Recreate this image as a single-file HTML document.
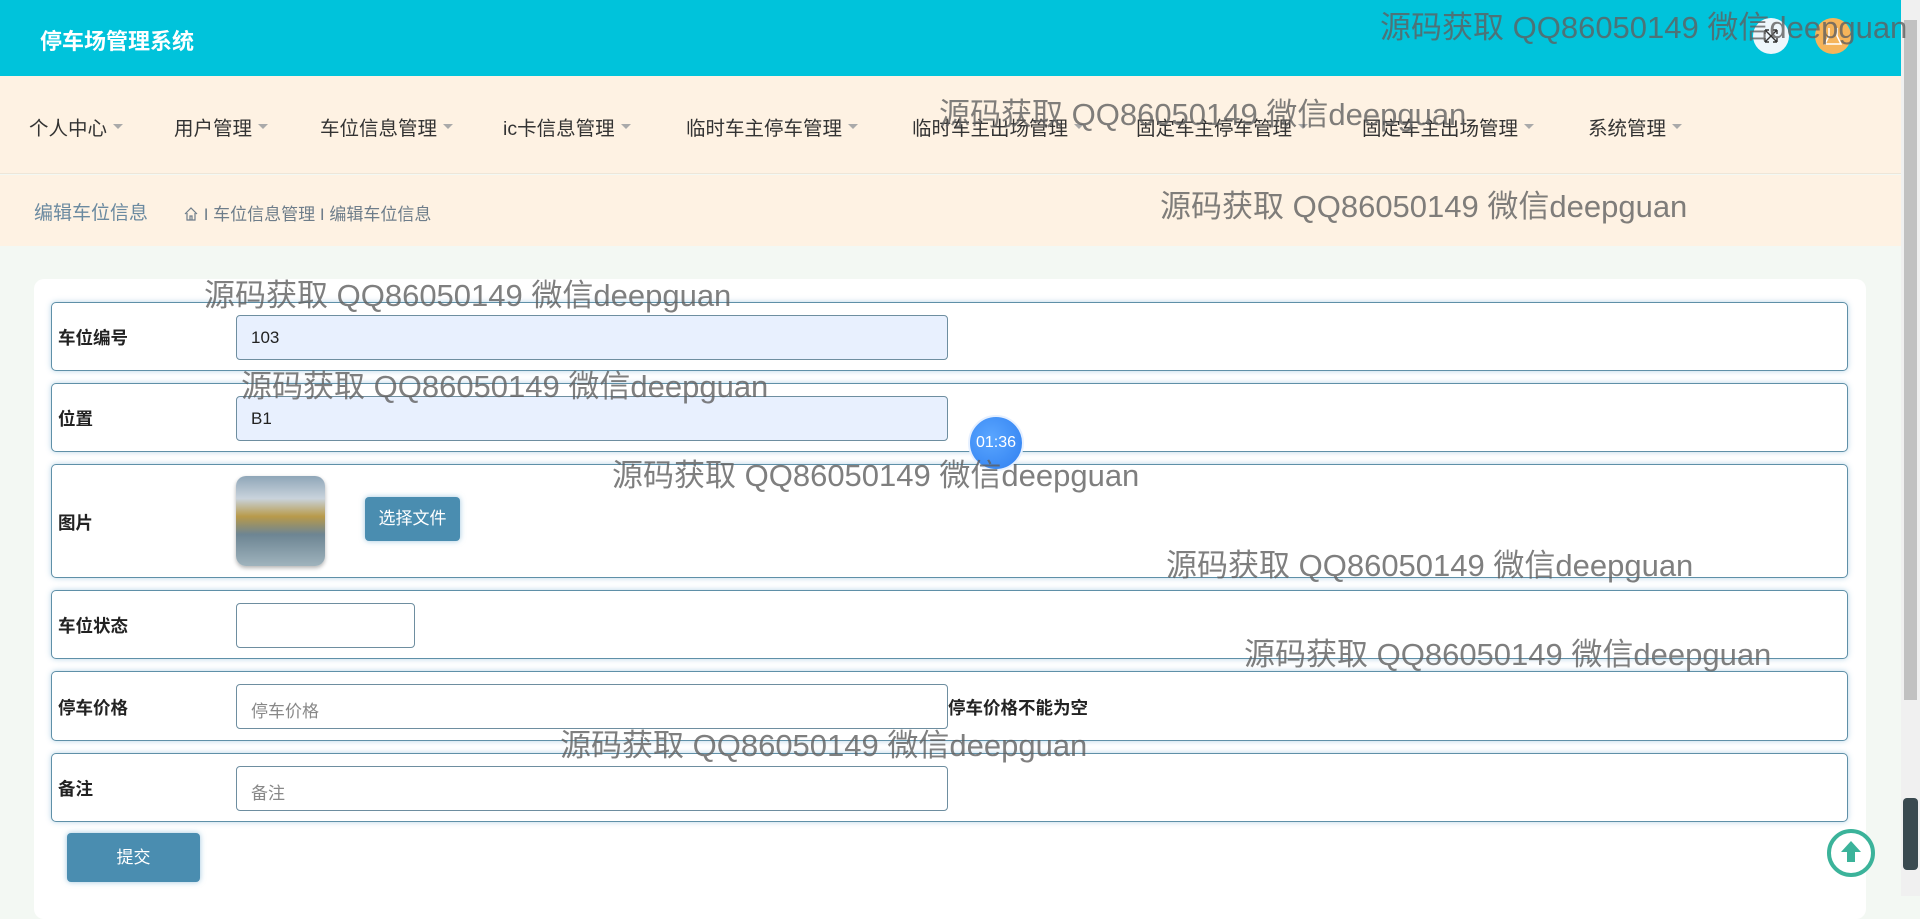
<!DOCTYPE html>
<html><head><meta charset="utf-8">
<style>
*{box-sizing:border-box;margin:0;padding:0}
body{width:1920px;height:896px;overflow:hidden;background:#F3F8F3;font-family:"Liberation Sans","Noto Sans CJK SC",sans-serif;position:relative}
.hdr{position:absolute;left:0;top:0;width:1901px;height:76px;background:#00C3DB;box-shadow:0 2px 4px rgba(0,0,0,.15)}
.hdr .t{position:absolute;left:40px;top:24px;color:#fff;font-size:22px;font-weight:bold}
.circ{position:absolute;top:18px;width:36px;height:36px;border-radius:50%}
.nav{position:absolute;left:0;top:76px;width:1901px;height:98px;background:#FEF2E3;border-bottom:1px solid #eee6d8}
.nav span{position:absolute;top:36px;font-size:19.5px;color:#333}
.nav span:after{content:"";display:inline-block;margin-left:6px;vertical-align:middle;border-left:5px solid transparent;border-right:5px solid transparent;border-top:5px solid #aaa;position:relative;top:-3px}
.bc{position:absolute;left:0;top:175px;width:1901px;height:71px;background:#FEF2E3}
.bc .a{position:absolute;left:34px;top:23px;font-size:19px;color:#6b8aa0}
.bc .b{position:absolute;left:183px;top:25px;font-size:17px;color:#6e7d8a}
.panel{position:absolute;left:34px;top:279px;width:1832px;height:640px;background:#fff;border-radius:10px}
.row{position:absolute;left:51px;width:1797px;border:1px solid #5f90a8;border-radius:5px;background:#fff;box-shadow:0 0 6px rgba(95,160,200,.45)}
.lbl{position:absolute;left:6px;font-size:17.5px;font-weight:bold;color:#222}
.inp{position:absolute;left:184px;width:712px;height:45px;border:1px solid #6e8ea0;border-radius:4px;font-size:17px;padding:12px 14px;color:#222}
.ph{color:#888}
.wm{position:absolute;font-size:31px;color:rgba(95,95,95,.8);white-space:nowrap;font-family:"Liberation Sans","Noto Sans CJK SC",sans-serif}
.btn{position:absolute;background:#4A8DB0;color:#fff;border-radius:4px;text-align:center;box-shadow:0 0 6px rgba(95,160,200,.6)}
</style></head><body>
<div class="hdr"><div class="t">停车场管理系统</div>
<div class="circ" style="left:1753px;background:#eef6fb"><svg width="36" height="36"><path d="M12 12l12 12M24 12L12 24M12 12v4M12 12h4M24 24v-4M24 24h-4M24 12h-4M24 12v4M12 24h4M12 24v-4" stroke="#333" stroke-width="1.4" fill="none"/></svg></div>
<div class="circ" style="left:1815px;background:#F5B45A"><svg width="36" height="36"><path d="M14 10v8l-4 8h16l-4-8v-8" stroke="#fff" stroke-width="1.5" fill="none"/></svg></div>
</div>
<div class="nav">
<span style="left:29px">个人中心</span><span style="left:174px">用户管理</span><span style="left:320px">车位信息管理</span><span style="left:503px">ic卡信息管理</span><span style="left:686px">临时车主停车管理</span><span style="left:912px">临时车主出场管理</span><span style="left:1136px">固定车主停车管理</span><span style="left:1362px">固定车主出场管理</span><span style="left:1588px">系统管理</span>
</div>
<div class="bc"><div class="a">编辑车位信息</div><div class="b"><svg width="16" height="16" style="vertical-align:-2px"><path d="M2 8L8 2l6 6M4 7v7h8V7M7 14v-4h2v4" stroke="#6e7d8a" fill="none" stroke-width="1.2"/></svg> I 车位信息管理 I 编辑车位信息</div></div>
<div class="panel"></div>
<div class="row" style="top:302px;height:69px"><div class="lbl" style="top:22px">车位编号</div><div class="inp" style="top:12px;background:#E8F0FE">103</div></div>
<div class="row" style="top:383px;height:69px"><div class="lbl" style="top:22px">位置</div><div class="inp" style="top:12px;background:#E8F0FE">B1</div></div>
<div class="row" style="top:464px;height:114px"><div class="lbl" style="top:45px">图片</div>
<div style="position:absolute;left:184px;top:11px;width:89px;height:90px;border-radius:10px;background:linear-gradient(180deg,#8fa6b8 0%,#c9d3dc 25%,#b89a4a 45%,#6d8593 65%,#9fb3bd 100%);box-shadow:0 2px 4px rgba(0,0,0,.3)"></div>
<div class="btn" style="left:313px;top:32px;width:95px;height:44px;line-height:44px;font-size:17px">选择文件</div></div>
<div class="row" style="top:590px;height:69px"><div class="lbl" style="top:22px">车位状态</div><div class="inp" style="top:12px;width:179px"></div></div>
<div class="row" style="top:671px;height:70px"><div class="lbl" style="top:23px">停车价格</div><div class="inp ph" style="top:12px">停车价格</div><div class="lbl" style="left:896px;top:23px">停车价格不能为空</div></div>
<div class="row" style="top:753px;height:69px"><div class="lbl" style="top:22px">备注</div><div class="inp ph" style="top:12px">备注</div></div>
<div class="btn" style="left:67px;top:833px;width:133px;height:49px;line-height:49px;font-size:17px">提交</div>
<div style="position:absolute;left:968px;top:415px;width:56px;height:56px;border-radius:50%;background:radial-gradient(circle at 40% 40%,#5aa6ff,#2f7ff0);border:2px solid #e6f0ff;color:#fff;font-size:16px;text-align:center;line-height:52px">01:36</div>
<div style="position:absolute;left:1827px;top:829px;width:48px;height:48px;border-radius:50%;border:4px solid #3BB39A;background:#fff"><svg width="40" height="40"><path d="M20 8l-10 11h6v10h8V19h6z" fill="#3BB39A"/></svg></div>
<div style="position:absolute;left:1901px;top:0;width:19px;height:896px;background:#f0f0f0"><div style="position:absolute;left:3px;top:20px;width:13px;height:680px;background:#c1c1c1"></div><div style="position:absolute;left:2px;top:798px;width:15px;height:72px;background:#3a4a50;border-radius:4px"></div></div>
<div class="wm" style="left:1380px;top:2px">源码获取 QQ86050149 微信deepguan</div>
<div class="wm" style="left:939px;top:89px">源码获取 QQ86050149 微信deepguan</div>
<div class="wm" style="left:1160px;top:181px">源码获取 QQ86050149 微信deepguan</div>
<div class="wm" style="left:204px;top:270px">源码获取 QQ86050149 微信deepguan</div>
<div class="wm" style="left:241px;top:361px">源码获取 QQ86050149 微信deepguan</div>
<div class="wm" style="left:612px;top:450px">源码获取 QQ86050149 微信deepguan</div>
<div class="wm" style="left:1166px;top:540px">源码获取 QQ86050149 微信deepguan</div>
<div class="wm" style="left:1244px;top:629px">源码获取 QQ86050149 微信deepguan</div>
<div class="wm" style="left:560px;top:720px">源码获取 QQ86050149 微信deepguan</div>
</body></html>
